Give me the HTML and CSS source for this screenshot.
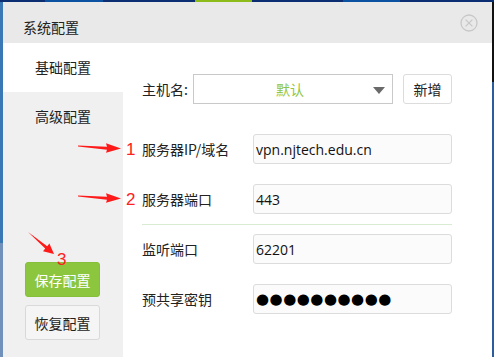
FILE: index.html
```html
<!DOCTYPE html>
<html lang="zh-CN">
<head>
    <meta charset="UTF-8">
    <meta name="viewport" content="width=device-width, initial-scale=1.0">
    <title>系统配置</title>
    <link rel="stylesheet" href="styles.css">
</head>
<body>
    <div class="window">
        <div class="titlebar">
            <span class="title">系统配置</span>
            <svg class="close" width="18" height="18" viewBox="0 0 18 18">
                <circle cx="9" cy="9" r="8" fill="none" stroke="#c8c8c8" stroke-width="1.3"/>
                <path d="M5.6 5.6 L12.4 12.4 M12.4 5.6 L5.6 12.4" stroke="#c8c8c8" stroke-width="1.3"/>
            </svg>
        </div>
        <div class="content">
            <div class="sidebar">
                <div class="tab active">基础配置</div>
                <div class="tab">高级配置</div>
                <div class="actions">
                    <!-- annotation 3 -->
                    <svg class="mark-arrow arrow-3" width="28" height="24" viewBox="0 0 28 24">
                        <path d="M0 0 L19.2 14.2 L21.4 11.6 L26 22 L15 19.2 L17.2 16.5 Z" fill="#ff1a1a"/>
                    </svg>
                    <span class="mark mark-3">3</span>
                    <button class="btn btn-save">保存配置</button>
                    <button class="btn btn-reset">恢复配置</button>
                </div>
            </div>
            <div class="main">
                <div class="row row-host">
                    <label class="host-label">主机名:</label>
                    <div class="select">
                        <span class="select-value">默认</span>
                        <span class="caret"></span>
                    </div>
                    <button class="btn-add">新增</button>
                </div>
                <div class="row">
                    <label class="field-label">
                        <svg class="mark-arrow arrow-row" width="43" height="10" viewBox="0 0 43 10">
                            <path d="M0 2.4 L29 3.8 L28 0.2 L43 5.5 L28 9.8 L29 6.8 L0 3.4 Z" fill="#ff1a1a"/>
                        </svg>
                        <span class="mark mark-row">1</span>
                        服务器IP/域名
                    </label>
                    <input class="field" type="text" value="vpn.njtech.edu.cn" readonly>
                </div>
                <div class="row">
                    <label class="field-label">
                        <svg class="mark-arrow arrow-row" width="43" height="10" viewBox="0 0 43 10">
                            <path d="M0 2.4 L29 3.8 L28 0.2 L43 5.5 L28 9.8 L29 6.8 L0 3.4 Z" fill="#ff1a1a"/>
                        </svg>
                        <span class="mark mark-row">2</span>
                        服务器端口
                    </label>
                    <input class="field" type="text" value="443" readonly>
                </div>
                <div class="divider"></div>
                <div class="row">
                    <label class="field-label">监听端口</label>
                    <input class="field" type="text" value="62201" readonly>
                </div>
                <div class="row">
                    <label class="field-label">预共享密钥</label>
                    <input class="field secret" type="text" value="●●●●●●●●●●" readonly>
                </div>
            </div>
        </div>
    </div>
</body>
</html>
```

FILE: styles.css
```css
html, body {
    height: 100%;
}

body {
    margin: 0;
    overflow: hidden;
    font-family: "Noto Sans CJK SC", sans-serif;
    font-size: 14px;
    color: #222;
    background:
        linear-gradient(to right, #0b2e73 0 45px, #0c52a3 45px 103px, #0b2e73 103px 195px, #8dbb1a 195px 252px, #0b2e73 252px 343px, #0c52a3 343px 400px, #0b2e73 400px) top / 100% 2px no-repeat,
        linear-gradient(#3a78b5 0 243px, #7190ba 243px) left / 3px 100% no-repeat,
        linear-gradient(#111 0 82px, #2d5c9c 82px) right / 2px 100% no-repeat,
        #1f4f8f;
}

.window {
    margin: 2px 2px 0 3px;
    height: 355px;
    background-color: white;
    display: flex;
    flex-direction: column;
}

.titlebar {
    height: 41px;
    flex: none;
    background-color: #e8e9e8;
    display: flex;
    align-items: center;
    justify-content: space-between;
    padding: 0 14px 0 20px;
}

.title {
    margin-top: 8px;
    line-height: 20px;
}

.content {
    flex: 1;
    display: flex;
}

.sidebar {
    width: 120px;
    flex: none;
    background-color: #f0f0f0;
    display: flex;
    flex-direction: column;
}

.tab {
    height: 49px;
    line-height: 49px;
    padding-left: 32px;
}

.tab.active {
    background-color: white;
}

.actions {
    position: relative;
    margin-top: 121px;
    padding-left: 22px;
    display: flex;
    flex-direction: column;
    gap: 8px;
}

.btn {
    width: 75px;
    height: 35px;
    border-radius: 3px;
    font-family: inherit;
    font-size: 14px;
    padding: 0;
}

.btn-save {
    background-color: #8cc63e;
    border: 1px solid #86c03a;
    color: white;
}

.btn-reset {
    background-color: #f5f5f5;
    border: 1px solid #d9d9d9;
    color: #222;
}

.mark {
    position: absolute;
    color: #ff2020;
    font-family: "Liberation Sans", sans-serif;
    font-size: 17px;
    line-height: 17px;
}

.mark-arrow {
    position: absolute;
}

.arrow-3 {
    left: 25px;
    top: -30px;
}

.mark-3 {
    left: 54px;
    top: -11px;
}

.main {
    flex: 1;
    padding: 31px 0 0 19px;
}

.row {
    display: flex;
    align-items: center;
    height: 30px;
    margin-bottom: 20px;
}

.row-host {
    margin-bottom: 30px;
}

.host-label {
    width: 51px;
}

.select {
    width: 198px;
    height: 28px;
    border: 1px solid #c9c9c9;
    position: relative;
    display: flex;
    align-items: center;
    justify-content: center;
}

.select-value {
    color: #8fc643;
    margin-left: -6px;
}

.caret {
    position: absolute;
    right: 7px;
    top: 12px;
    border-left: 6px solid transparent;
    border-right: 6px solid transparent;
    border-top: 7px solid #6a6a6a;
}

.btn-add {
    margin-left: 10px;
    width: 49px;
    height: 30px;
    background-color: white;
    border: 1px solid #dcdcdc;
    border-radius: 3px;
    font-family: inherit;
    font-size: 14px;
    color: #222;
    padding: 0;
}

.field-label {
    position: relative;
    width: 111px;
    line-height: 20px;
}

.arrow-row {
    left: -64px;
    top: 4px;
}

.mark-row {
    left: -16px;
    top: 2px;
}

.field {
    width: 199px;
    height: 30px;
    box-sizing: border-box;
    border: 1px solid #dcdcdc;
    border-radius: 3px;
    background-color: #fbfbfb;
    padding: 0 2px;
    font-family: "Open Sans", sans-serif;
    font-size: 14px;
    color: #111;
    outline: none;
}

.field.secret {
    font-family: "DejaVu Sans", sans-serif;
    font-size: 15px;
    letter-spacing: 0.5px;
    color: #000;
}

.divider {
    height: 1px;
    width: 310px;
    background-color: #d8ecd0;
    margin: -10px 0 9px 0;
}
```
